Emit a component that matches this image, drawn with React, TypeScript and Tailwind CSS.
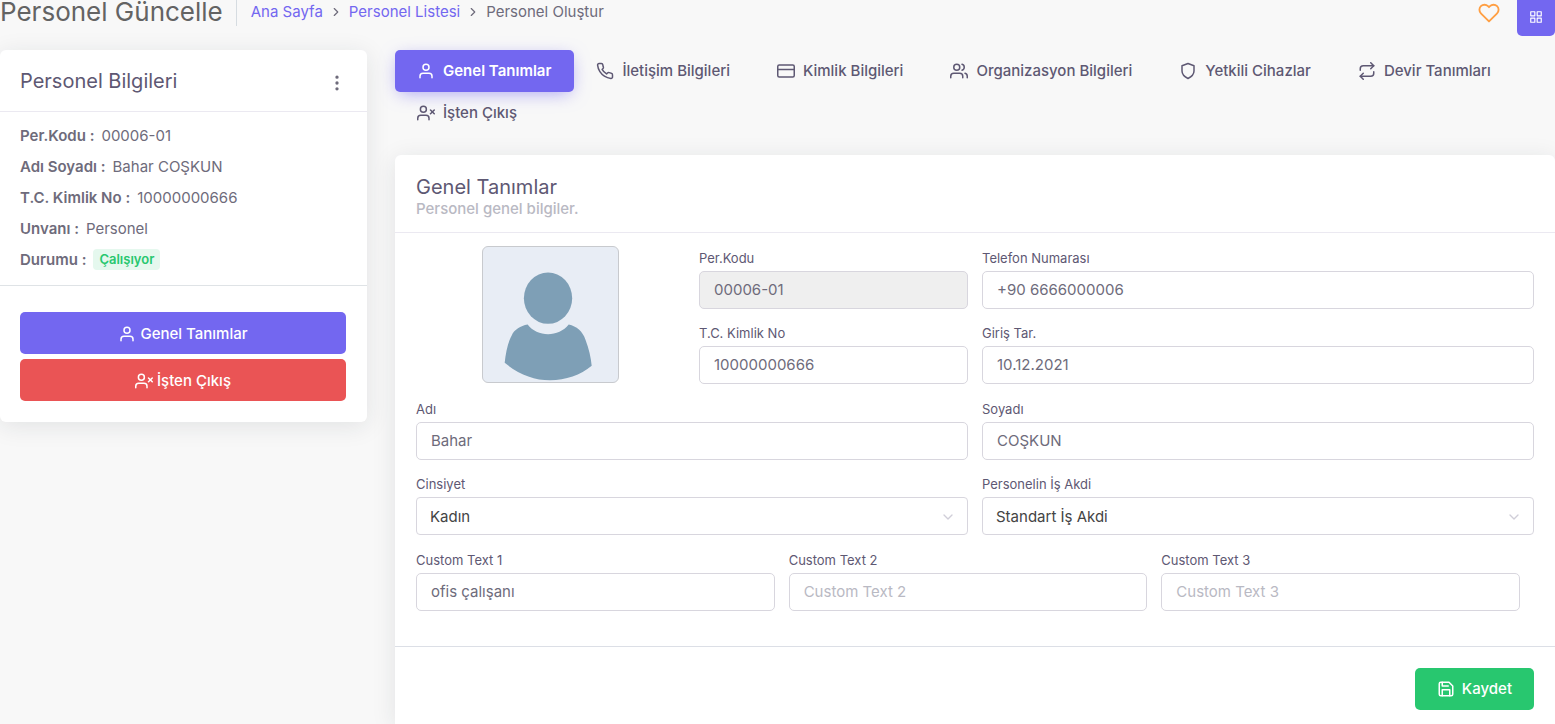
import { useState } from "react";
import type { InputHTMLAttributes, ReactNode } from "react";
import type { IconType } from "react-icons";
import {
  FiChevronDown,
  FiChevronRight,
  FiCreditCard,
  FiGrid,
  FiHeart,
  FiMoreVertical,
  FiPhone,
  FiRepeat,
  FiSave,
  FiShield,
  FiUser,
  FiUserX,
  FiUsers,
} from "react-icons/fi";

const tabs: { label: string; icon: IconType }[] = [
  { label: "Genel Tanımlar", icon: FiUser },
  { label: "İletişim Bilgileri", icon: FiPhone },
  { label: "Kimlik Bilgileri", icon: FiCreditCard },
  { label: "Organizasyon Bilgileri", icon: FiUsers },
  { label: "Yetkili Cihazlar", icon: FiShield },
  { label: "Devir Tanımları", icon: FiRepeat },
  { label: "İşten Çıkış", icon: FiUserX },
];

const details = [
  { label: "Per.Kodu :", value: "00006-01" },
  { label: "Adı Soyadı :", value: "Bahar COŞKUN" },
  { label: "T.C. Kimlik No :", value: "10000000666" },
  { label: "Unvanı :", value: "Personel" },
];

function Field({
  id,
  label,
  className = "",
  children,
}: {
  id: string;
  label: string;
  className?: string;
  children: ReactNode;
}) {
  return (
    <div className={`pt-[3px] ${className}`}>
      <label htmlFor={id} className="mb-1 block text-[13px] leading-[18px] text-[#5e5873]">
        {label}
      </label>
      {children}
    </div>
  );
}

function TextField({
  id,
  label,
  className,
  ...props
}: { id: string; label: string } & InputHTMLAttributes<HTMLInputElement>) {
  return (
    <Field id={id} label={label} className={className}>
      <input
        id={id}
        type="text"
        className="block h-[38px] w-full rounded-[5px] border border-[#d8d6de] bg-white px-3.5 pb-0.5 text-[15px] text-[#6e6b7b] outline-none placeholder:text-[#b9b9c3] read-only:bg-[#efefef] focus:border-[#7367f0]"
        {...props}
      />
    </Field>
  );
}

function SelectField({
  id,
  label,
  options,
  className,
}: {
  id: string;
  label: string;
  options: string[];
  className?: string;
}) {
  return (
    <Field id={id} label={label} className={className}>
      <div className="relative">
        <select
          id={id}
          className="block h-[38px] w-full appearance-none rounded-[4px] border border-[#d8d6de] bg-white px-[13px] pt-0.5 text-[15px] text-[#444444] outline-none focus:border-[#7367f0]"
        >
          {options.map((option) => (
            <option key={option}>{option}</option>
          ))}
        </select>
        <FiChevronDown className="pointer-events-none absolute top-3 right-3 size-4 text-[#d0ced8]" />
      </div>
    </Field>
  );
}

function Avatar() {
  return (
    <svg
      viewBox="0 0 137 137"
      role="img"
      aria-label="Personel"
      className="size-[137px] justify-self-center rounded-md border border-[#c8cace] bg-[#e8edf5]"
    >
      <ellipse cx="66" cy="52" rx="24.5" ry="26" fill="#7e9fb6" />
      <path
        d="M45.3 78.7C50 85 58 88.5 66 88.5S82 85 87 78.7C95 80.5 101 85.5 104 94C107.5 103 109.5 112 110.3 120.5C99 130 84 135.2 68 135.2S36 129 22 117.5C23 108 25 97 29 90C32 83.5 38 80 45.3 78.7Z"
        fill="#7e9fb6"
      />
    </svg>
  );
}

function Header() {
  return (
    <header className="flex h-9 items-start justify-between">
      <div className="flex items-start">
        <h1 className="border-r border-[#d6dce1] pr-[13px] pb-0.5 text-[26px] leading-6 text-[#636363]">
          Personel Güncelle
        </h1>
        <nav aria-label="breadcrumb" className="pl-3.5">
          <ol className="flex items-center text-[15px] leading-6">
            <li>
              <a href="#" className="text-[#7367f0]">Ana Sayfa</a>
            </li>
            <li aria-hidden="true">
              <FiChevronRight className="mx-1.5 size-3.5 text-[#6e6b7b]" />
            </li>
            <li>
              <a href="#" className="text-[#7367f0]">Personel Listesi</a>
            </li>
            <li aria-hidden="true">
              <FiChevronRight className="mx-1.5 size-3.5 text-[#6e6b7b]" />
            </li>
            <li className="text-[#6e6b7b]" aria-current="page">Personel Oluştur</li>
          </ol>
        </nav>
      </div>
      <div className="flex items-start gap-[17px]">
        <button type="button" aria-label="Favori" className="pt-0.5 text-[#ff9f43]">
          <FiHeart className="size-[22px]" />
        </button>
        <button
          type="button"
          aria-label="Menü"
          className="flex h-9 w-[38px] items-center justify-center rounded-b-[5px] bg-[#7367f0] pb-0.5 text-white"
        >
          <FiGrid className="size-3.5" />
        </button>
      </div>
    </header>
  );
}

function Summary() {
  return (
    <aside className="self-start rounded-md bg-white text-[15px] text-[#6e6b7b] shadow-[0_4px_24px_0_rgba(34,41,47,0.1)]">
      <div className="flex h-[62px] items-center justify-between border-b border-[#ebe9f1] px-5">
        <h2 className="text-[20px] leading-6 text-[#5e5873]">Personel Bilgileri</h2>
        <button type="button" aria-label="Diğer" className="pt-1">
          <FiMoreVertical className="size-5" />
        </button>
      </div>
      <dl className="border-b border-[#dfe3e6] px-5 pt-2 pb-2.5 leading-[31px]">
        {details.map(({ label, value }) => (
          <div key={label} className="flex gap-[7px]">
            <dt className="font-semibold">{label}</dt>
            <dd>{value}</dd>
          </div>
        ))}
        <div className="flex items-center gap-[7px]">
          <dt className="font-semibold">Durumu :</dt>
          <dd className="rounded-[4px] bg-[#e5f8ee] px-1.5 text-[13px] leading-[21px] font-semibold text-[#28c76f]">
            Çalışıyor
          </dd>
        </div>
      </dl>
      <div className="flex flex-col gap-[5px] pt-[26px] pr-[21px] pb-[21px] pl-5 font-medium text-white">
        <button
          type="button"
          className="flex h-[42px] items-center justify-center gap-1 rounded-[5px] bg-[#7367f0] pt-0.5"
        >
          <FiUser className="size-[18px]" />
          Genel Tanımlar
        </button>
        <button
          type="button"
          className="flex h-[42px] items-center justify-center gap-1 rounded-[5px] bg-[#ea5455] pt-0.5"
        >
          <FiUserX className="size-[18px]" />
          İşten Çıkış
        </button>
      </div>
    </aside>
  );
}

export default function App() {
  const [active, setActive] = useState(0);

  return (
    <div className="min-h-screen bg-[#f8f8f8] font-['Inter',sans-serif]">
      <Header />
      <div className="mt-3.5 grid grid-cols-[minmax(0,367fr)_minmax(0,1160fr)] gap-7">
        <Summary />

        <main>
          <div role="tablist" className="mb-[21px] flex flex-wrap">
            {tabs.map(({ label, icon: Icon }, index) => (
              <button
                key={label}
                type="button"
                role="tab"
                aria-selected={active === index}
                onClick={() => setActive(index)}
                className={`flex h-[42px] items-center gap-2 rounded-[5px] pl-[22px] text-[15px] ${
                  active === index
                    ? "bg-[#7367f0] pr-[23px] font-semibold text-white shadow-[0_4px_18px_-4px_rgba(115,103,240,0.65)]"
                    : "pr-[25px] font-medium text-[#5e5873]"
                }`}
              >
                <Icon className="size-[18px]" />
                {label}
              </button>
            ))}
          </div>

          <form
            className="rounded-t-md bg-white shadow-[0_4px_24px_0_rgba(34,41,47,0.1)]"
            onSubmit={(e) => e.preventDefault()}
          >
            <div className="h-[78px] border-b border-[#ebe9f1] px-[21px] pt-5">
              <h2 className="text-[20px] leading-6 text-[#5e5873]">Genel Tanımlar</h2>
              <p className="text-[15px] leading-5 font-medium text-[#b9b9c3]">
                Personel genel bilgiler.
              </p>
            </div>

            <div className="space-y-[13px] px-[21px] pt-[13px] pb-[35px]">
              <div className="grid grid-cols-4 gap-x-3.5 gap-y-3">
                <div className="row-span-2 grid">
                  <Avatar />
                </div>
                <TextField id="code" label="Per.Kodu" defaultValue="00006-01" readOnly />
                <TextField
                  id="phone"
                  label="Telefon Numarası"
                  defaultValue="+90 6666000006"
                  className="col-span-2"
                />
                <TextField id="identity" label="T.C. Kimlik No" defaultValue="10000000666" />
                <TextField
                  id="start"
                  label="Giriş Tar."
                  defaultValue="10.12.2021"
                  className="col-span-2"
                />
              </div>

              <div className="grid grid-cols-2 gap-x-3.5 gap-y-3">
                <TextField id="name" label="Adı" defaultValue="Bahar" />
                <TextField id="surname" label="Soyadı" defaultValue="COŞKUN" />
                <SelectField id="gender" label="Cinsiyet" options={["Kadın", "Erkek"]} />
                <SelectField
                  id="contract"
                  label="Personelin İş Akdi"
                  options={["Standart İş Akdi"]}
                />
              </div>

              <div className="grid grid-cols-3 gap-x-3.5 pr-3.5">
                <TextField
                  id="custom1"
                  label="Custom Text 1"
                  placeholder="Custom Text 1"
                  defaultValue="ofis çalışanı"
                />
                <TextField id="custom2" label="Custom Text 2" placeholder="Custom Text 2" />
                <TextField id="custom3" label="Custom Text 3" placeholder="Custom Text 3" />
              </div>
            </div>

            <div className="flex justify-end border-t border-[#dcdfe6] px-[21px] pt-[21px] pb-3.5">
              <button
                type="submit"
                className="flex h-[42px] items-center gap-[7px] rounded-[5px] bg-[#28c76f] px-[22px] text-[15px] font-medium text-white"
              >
                <FiSave className="size-[18px]" />
                Kaydet
              </button>
            </div>
          </form>
        </main>
      </div>
    </div>
  );
}
